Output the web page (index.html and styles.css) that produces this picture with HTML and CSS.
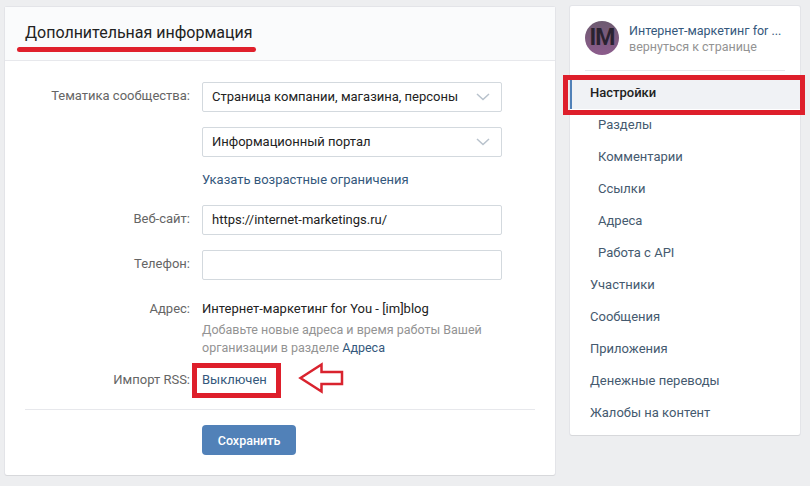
FILE: index.html
```html
<!DOCTYPE html>
<html lang="en">
<head>
    <meta charset="UTF-8">
    <title>Дополнительная информация</title>
    <link rel="stylesheet" href="styles.css">
</head>
<body>
    <div class="page">
        <div class="main-card">
            <div class="card-head">Дополнительная информация</div>
            <div class="form">
                <div class="row">
                    <div class="label">Тематика сообщества:</div>
                    <div class="field select">
                        <span>Страница компании, магазина, персоны</span>
                        <svg class="chevron" width="14" height="8" viewBox="0 0 14 8"><path d="M1 1l6 5.5L13 1" fill="none" stroke="#b8c2cc" stroke-width="1.5"/></svg>
                    </div>
                </div>
                <div class="row">
                    <div class="label"></div>
                    <div class="field select">
                        <span>Информационный портал</span>
                        <svg class="chevron" width="14" height="8" viewBox="0 0 14 8"><path d="M1 1l6 5.5L13 1" fill="none" stroke="#b8c2cc" stroke-width="1.5"/></svg>
                    </div>
                </div>
                <div class="row row-link">
                    <div class="label"></div>
                    <a class="link">Указать возрастные ограничения</a>
                </div>
                <div class="row">
                    <div class="label">Веб-сайт:</div>
                    <div class="field">https://internet-marketings.ru/</div>
                </div>
                <div class="row">
                    <div class="label">Телефон:</div>
                    <div class="field"></div>
                </div>
                <div class="row row-address">
                    <div class="label">Адрес:</div>
                    <div class="address">
                        <div class="address-name">Интернет-маркетинг for You - [im]blog</div>
                        <div class="hint">Добавьте новые адреса и время работы Вашей организации в разделе <a class="link">Адреса</a></div>
                    </div>
                </div>
                <div class="row row-rss">
                    <div class="label">Импорт RSS:</div>
                    <a class="link">Выключен</a>
                </div>
                <div class="divider"></div>
                <div class="row">
                    <div class="label"></div>
                    <button class="save">Сохранить</button>
                </div>
            </div>
        </div>

        <div class="side-card">
            <div class="side-head">
                <div class="avatar">IM</div>
                <div class="side-title">
                    <div class="side-name">Интернет-маркетинг for ...</div>
                    <div class="side-back">вернуться к странице</div>
                </div>
            </div>
            <div class="menu">
                <div class="menu-item active">Настройки</div>
                <div class="menu-item sub">Разделы</div>
                <div class="menu-item sub">Комментарии</div>
                <div class="menu-item sub">Ссылки</div>
                <div class="menu-item sub">Адреса</div>
                <div class="menu-item sub">Работа с API</div>
                <div class="menu-item">Участники</div>
                <div class="menu-item">Сообщения</div>
                <div class="menu-item">Приложения</div>
                <div class="menu-item">Денежные переводы</div>
                <div class="menu-item">Жалобы на контент</div>
            </div>
        </div>
    </div>

    <!-- red marks drawn on top of the screenshot -->
    <div class="mark-line"></div>
    <div class="mark-box mark-settings"></div>
    <div class="mark-box mark-rss"></div>
    <svg class="mark-arrow" width="46" height="32" viewBox="0 0 46 32"><path d="M2.500 16L23.500 2.500v7.500H44v12H23.500v7.500z" fill="#fff" stroke="#d9232e" stroke-width="2.500"/></svg>
</body>
</html>
```

FILE: styles.css
```css
* {
    margin: 0;
    padding: 0;
    box-sizing: border-box;
    font-family: Roboto, 'Liberation Sans', sans-serif;
}

body {
    background: #edeef0;
    width: 810px;
    height: 486px;
    overflow: hidden;
    font-size: 13px;
    color: #222;
    position: relative;
}

.page {
    display: flex;
    align-items: flex-start;
    gap: 15px;
    padding: 7px 10px 0 5px;
}

.main-card {
    width: 550px;
    height: 468px;
    background: #fff;
    border-radius: 2px;
    box-shadow: 0 1px 0 0 #d7d8db, 0 0 0 1px #e3e4e8;
}

.card-head {
    height: 54px;
    padding: 14px 20px 0;
    background: #fafbfc;
    border-bottom: 1px solid #e7e8ec;
    font-size: 16px;
    line-height: 24px;
    color: #222;
}

.form {
    padding-top: 21px;
}

.row {
    display: flex;
    margin-bottom: 15px;
}

.label {
    width: 185px;
    margin-right: 12px;
    text-align: right;
    line-height: 28px;
    color: #656565;
    flex-shrink: 0;
}

.field {
    width: 300px;
    height: 30px;
    padding: 0 9px;
    border: 1px solid #d3d9de;
    border-radius: 2px;
    line-height: 28px;
    color: #222;
    display: flex;
    align-items: center;
    justify-content: space-between;
}

.chevron {
    margin-right: 2px;
}

.link {
    color: #34587c;
}

.row-link {
    margin-top: 1px;
    margin-bottom: 17px;
    height: 16px;
    line-height: 16px;
}

.row-link .label,
.row-address .label,
.row-rss .label {
    line-height: 16px;
}

.row-address {
    margin-top: 21px;
    margin-bottom: 0;
}

.address {
    width: 300px;
    line-height: 18px;
}

.address-name {
    line-height: 16px;
    margin-bottom: 4px;
}

.hint {
    color: #939393;
    font-size: 12.500px;
}

.row-rss {
    margin-top: 15px;
    margin-bottom: 0;
    line-height: 16px;
}

.divider {
    height: 1px;
    margin: 21px 20px 15px;
    background: #e7e8ec;
}

.save {
    width: 94px;
    height: 30px;
    border: none;
    border-radius: 4px;
    background: #5181b8;
    color: #fff;
    font-size: 12.500px;
    font-weight: 500;
}

.side-card {
    width: 230px;
    height: 429px;
    margin-top: -1px;
    background: #fff;
    border-radius: 2px;
    box-shadow: 0 1px 0 0 #d7d8db, 0 0 0 1px #e3e4e8;
}

.side-head {
    display: flex;
    align-items: center;
    gap: 10px;
    height: 65px;
    margin: 0 15px;
    border-bottom: 1px solid #e7e8ec;
}

.avatar {
    width: 34px;
    height: 34px;
    border-radius: 50%;
    background: linear-gradient(#6d5a70, #8c5c8c);
    color: #2a2230;
    font-size: 23px;
    font-weight: 700;
    line-height: 34px;
    text-align: center;
    letter-spacing: -1px;
    overflow: hidden;
    flex-shrink: 0;
}

.side-title {
    margin-top: 1px;
    line-height: 16px;
    font-size: 12.500px;
}

.side-name {
    color: #34587c;
    white-space: nowrap;
}

.side-back {
    color: #939393;
}

.menu {
    padding-top: 6px;
}

.menu-item {
    height: 32px;
    padding-left: 20px;
    line-height: 32px;
    color: #455a6f;
}

.menu-item.sub {
    padding-left: 28px;
}

.menu-item.active {
    background: #f0f2f5;
    border-left: 2px solid #5181b8;
    padding-left: 18px;
    font-weight: 500;
    color: #222;
}

.mark-line {
    position: absolute;
    left: 17px;
    top: 47px;
    width: 239px;
    height: 5px;
    border-radius: 3px;
    background: #e0202c;
}

.mark-box {
    position: absolute;
    border: 5px solid #de1f2b;
}

.mark-settings {
    left: 563px;
    top: 75px;
    width: 242px;
    height: 40px;
}

.mark-rss {
    left: 192px;
    top: 363px;
    width: 89px;
    height: 35px;
}

.mark-arrow {
    position: absolute;
    left: 298px;
    top: 362px;
}
```
